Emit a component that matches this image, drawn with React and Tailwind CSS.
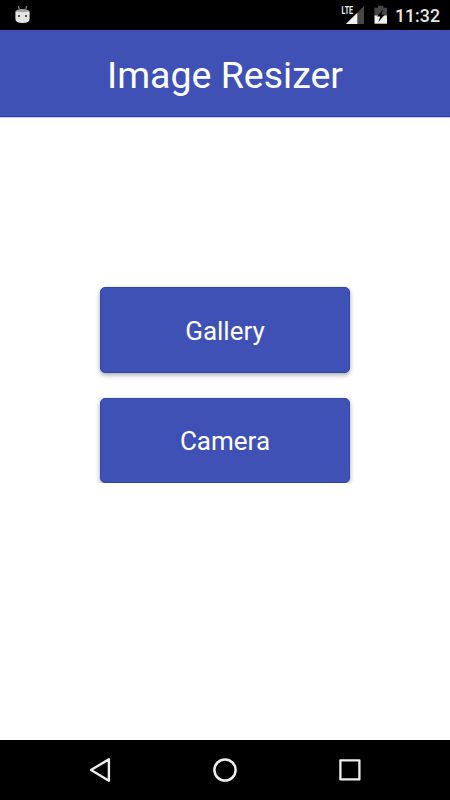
function StatusBar() {
  return (
    <div className="flex h-[30px] shrink-0 items-center justify-between bg-black pl-[14px] pr-[10px]">
      <svg width="17" height="19" viewBox="0 0 17 19" className="-mt-[2px]">
        <path d="M4.4 1.2L5.2 4.2M12.6 1.2L11.8 4.2" stroke="#a9acac" strokeWidth="1" fill="none" />
        <path d="M2.4 5.2Q8.5 3 14.6 5.2L15.2 8.5H1.8Z" fill="#a5a5a5" />
        <path d="M1.4 6.2Q8.5 8.4 15.6 6.2V14Q15.6 18 8.5 18Q1.4 18 1.4 14Z" fill="#e4e4e4" />
        <rect x="4" y="10" width="2" height="2" fill="#555" />
        <rect x="11" y="10" width="2" height="2" fill="#555" />
      </svg>
      <div className="flex items-center">
        <svg width="24" height="20" viewBox="0 0 24 20" className="-mt-[2px]">
          <path d="M23 2V20H5Z" fill="#474747" />
          <path d="M16.3 8.7V20H5Z" fill="#f1f1f1" />
          <path d="M0 0H12V10.6H0Z" fill="#000" />
          <text x="0.6" y="9.6" fontSize="11" fontWeight="700" textLength="11.4" lengthAdjust="spacingAndGlyphs" fill="#eee" className="font-['Roboto',sans-serif]">
            LTE
          </text>
        </svg>
        <svg width="14" height="20" viewBox="0 0 14 20" className="ml-[9px] -mt-[1px]">
          <path d="M4 0.8H9.4V2.8H13V12H0.5V2.8H4Z" fill="#474747" />
          <path d="M0.5 10.5H13V18.7H0.5Z" fill="#f1f1f1" />
          <path d="M9.2 4.6L3 11.4H6.2L4.4 17L10.6 9.8H7.4Z" fill="#000" />
        </svg>
        <span className="ml-[7px] mt-[1px] font-['Roboto',sans-serif] text-[17.8px] font-medium leading-[22px] text-[#e6e6e6]">11:32</span>
      </div>
    </div>
  );
}

function ActionButton({ children }) {
  return (
    <button className="h-[85.5px] w-[250px] rounded-[5px] border border-[#2f46b0] bg-[#3f51b5] pt-[2px] text-[26px] text-white shadow-[0_2px_5px_rgba(0,0,0,0.35)]">
      {children}
    </button>
  );
}

function NavBar() {
  return (
    <nav className="flex h-[60px] shrink-0 items-center justify-center gap-[101px] bg-black">
      <svg width="24" height="26" viewBox="0 0 24 26" fill="none" stroke="#eee" strokeWidth="2.4" strokeLinejoin="round">
        <path d="M20.9 2.3V23.7L3 13Z" />
      </svg>
      <svg width="24" height="26" viewBox="0 0 24 26" fill="none" stroke="#eee" strokeWidth="2.5">
        <circle cx="12" cy="13" r="10.6" />
      </svg>
      <svg width="24" height="26" viewBox="0 0 24 26" fill="none" stroke="#eee" strokeWidth="2.3" strokeLinejoin="round">
        <rect x="2.4" y="3.4" width="19" height="19" />
      </svg>
    </nav>
  );
}

export default function App() {
  return (
    <div className="flex h-[800px] w-[450px] flex-col overflow-hidden bg-white font-['Roboto',sans-serif]">
      <StatusBar />
      <header className="flex h-[87px] shrink-0 items-center justify-center border-b border-[#2440ac] bg-[#3f51b5] pt-[4px] shadow-[0_1px_0_#c5cbe9]">
        <h1 className="text-[37.5px] leading-[46px] text-white">Image Resizer</h1>
      </header>
      <main className="flex flex-1 flex-col">
        <div className="flex h-[366px] flex-col items-center justify-end gap-[24.7px] overflow-hidden">
          <ActionButton>Gallery</ActionButton>
          <ActionButton>Camera</ActionButton>
        </div>
      </main>
      <NavBar />
    </div>
  );
}
